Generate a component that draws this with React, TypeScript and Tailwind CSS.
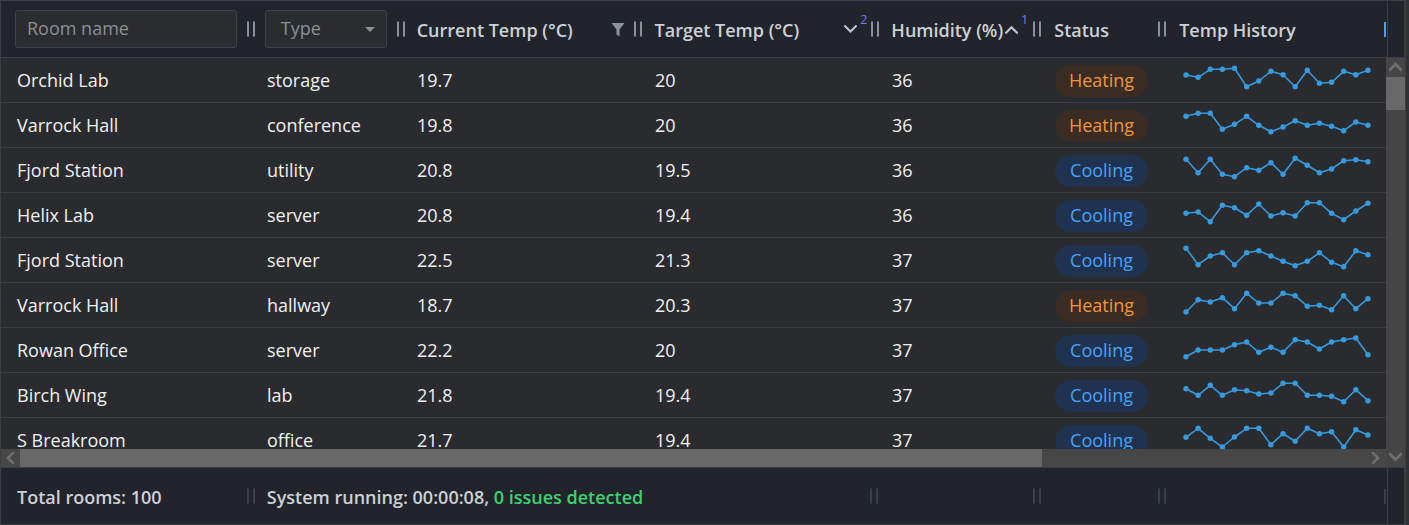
import React from 'react';

// Dark room-monitoring grid, one screen of it

interface Room {
    name: string;
    type: string;
    current: string;
    target: string;
    humidity: number;
    status: 'Heating' | 'Cooling';
    history: number[];
}

const rooms: Room[] = [
    { name: 'Orchid Lab', type: 'storage', current: '19.7', target: '20', humidity: 36, status: 'Heating', history: [17, 19.3, 11.3, 11.3, 10.3, 28.7, 23, 13.3, 16.7, 28.7, 12.3, 25.3, 24.3, 13.3, 16.7, 12.3] },
    { name: 'Varrock Hall', type: 'conference', current: '19.8', target: '20', humidity: 36, status: 'Heating', history: [13.3, 10.3, 10.3, 26.3, 21.3, 13.3, 22.3, 28.7, 24, 17.7, 22.3, 20.3, 23.3, 27.7, 19, 22.3] },
    { name: 'Fjord Station', type: 'utility', current: '20.8', target: '19.5', humidity: 36, status: 'Cooling', history: [11.3, 24.7, 11.3, 26.3, 28.7, 19.7, 22.3, 14.7, 26.3, 10.3, 17.3, 24.7, 21, 12.7, 11.7, 13.7] },
    { name: 'Helix Lab', type: 'server', current: '20.8', target: '19.4', humidity: 36, status: 'Cooling', history: [20.3, 19, 28.7, 12.3, 14.7, 22.3, 11, 23, 19.7, 23, 9.7, 9.7, 20.3, 26.7, 18, 10.3] },
    { name: 'Fjord Station', type: 'server', current: '22.5', target: '21.3', humidity: 37, status: 'Cooling', history: [10.3, 26.7, 18, 14.7, 26.7, 14.7, 12.7, 18, 23.3, 27.7, 23.3, 14.7, 24.3, 28.7, 12.7, 16.7] },
    { name: 'Varrock Hall', type: 'hallway', current: '18.7', target: '20.3', humidity: 37, status: 'Heating', history: [29, 16.7, 19, 14.7, 25.7, 10.3, 20, 20, 10.3, 12.7, 23.3, 22.3, 26.7, 12.7, 25.7, 15.7] },
    { name: 'Rowan Office', type: 'server', current: '22.2', target: '20', humidity: 37, status: 'Cooling', history: [28.7, 22, 22, 22, 16.7, 14, 24.3, 19.3, 24.3, 11.7, 14, 21, 14, 11.7, 10, 26.7] },
    { name: 'Birch Wing', type: 'lab', current: '21.8', target: '19.4', humidity: 37, status: 'Cooling', history: [15.7, 22.3, 12.3, 22.3, 16.7, 17.7, 21, 20, 10.3, 10.3, 22.3, 22.3, 23.3, 28.7, 16.7, 27.7] },
    { name: 'S Breakroom', type: 'office', current: '21.7', target: '19.4', humidity: 37, status: 'Cooling', history: [19.3, 10.3, 20.3, 29, 19, 10.3, 10.3, 26.7, 15.7, 23.3, 10.3, 15.7, 13.7, 29, 11.7, 17] },
];

const Grip: React.FC<{ dim?: boolean }> = ({ dim }) => {
    const bar = dim ? 'bg-[#3a3f46]' : 'bg-[#8a919b]';
    return (
        <span className="absolute right-[-4px] top-1/2 -translate-y-1/2 z-10 flex gap-[4px]">
            <span className={`w-[2px] h-[15px] ${bar}`} />
            <span className={`w-[2px] h-[15px] ${bar}`} />
        </span>
    );
};

const Chevron: React.FC<{ dir: 'up' | 'down' | 'left' | 'right'; color: string; size?: number; width?: number }> = ({ dir, color, size = 12, width = 2 }) => {
    const pts = {
        down: '1,2 6,7 11,2',
        up: '1,8 6,3 11,8',
        left: '8,1 3,6 8,11',
        right: '3,1 8,6 3,11',
    }[dir];
    return (
        <svg width={size} height={size} viewBox="0 0 12 12" className="block">
            <polyline points={pts} fill="none" stroke={color} strokeWidth={width} strokeLinecap="square" />
        </svg>
    );
};

const Sparkline: React.FC<{ values: number[] }> = ({ values }) => {
    const pts = values.map((y, i) => [23 + i * 12.13, y]);
    return (
        <svg width="222" height="44" className="block">
            <polyline points={pts.map(p => p.join(',')).join(' ')} fill="none" stroke="#379ade" strokeWidth="1.6" strokeLinejoin="round" />
            {pts.map(([x, y], i) => (
                <circle key={i} cx={x} cy={y} r="2.7" fill="#379ade" />
            ))}
        </svg>
    );
};

const StatusPill: React.FC<{ status: Room['status'] }> = ({ status }) => {
    const heat = status === 'Heating';
    return (
        <span className={`w-[93px] h-[32px] rounded-full flex items-center justify-center ${heat ? 'bg-[#3a2c22] text-[#f0953b]' : 'bg-[#1f3350] text-[#4aa2f6]'}`}>
            {status}
        </span>
    );
};

const App: React.FC = () => {
    return (
        <div className="w-[1409px] h-[525px] flex bg-[#2f3134] font-['Open_Sans',sans-serif] text-[18px] overflow-hidden">
            <div className="w-[1406px] h-[525px] flex flex-col border border-[#3b3e43] bg-[#2a2b2e]">
                {/* header */}
                <div className="h-[57px] flex shrink-0 bg-[#21252b] border-b border-[#3a3e44] text-[#cdd0d5] font-semibold">
                    <div className="relative w-[250px] flex items-center pl-[14px]">
                        <div className="w-[222px] h-[38px] rounded-[3px] border border-[#3f4349] bg-[#2a2c30] flex items-center pl-[11px] pb-[1px] text-[#8b9096] font-normal">
                            Room name
                        </div>
                        <Grip />
                    </div>
                    <div className="relative w-[150px] flex items-center pl-[14px]">
                        <div className="w-[122px] h-[38px] rounded-[3px] border border-[#3f4349] bg-[#2a2c30] flex items-center pl-[15px] pr-[11px] text-[#8b9096] font-normal">
                            <span className="-mt-[2px]">Type</span>
                            <svg width="10" height="5" viewBox="0 0 10 5" className="ml-auto">
                                <polygon points="0,0 10,0 5,5" fill="#8b9096" />
                            </svg>
                        </div>
                        <Grip />
                    </div>
                    <div className="relative w-[237px] flex items-center pl-4 pr-[13px] pt-[2px]">
                        <span className="whitespace-nowrap">Current Temp (°C)</span>
                        <svg width="14" height="15" viewBox="0 0 14 15" className="ml-auto -mt-[2px]">
                            <path d="M0.5 1 H13.5 L8.5 7.5 V14.5 L5.5 12.5 V7.5 Z" fill="#8d939c" />
                        </svg>
                        <Grip />
                    </div>
                    <div className="relative w-[238px] flex items-center pl-[17px] pr-[8px] pt-[2px]">
                        <span className="whitespace-nowrap">Target Temp (°C)</span>
                        <span className="ml-auto flex items-center">
                            <Chevron dir="down" color="#c3c7cd" size={13} />
                            <span className="relative top-[-10px] ml-[3px] text-[12.5px] leading-none font-normal text-[#7a78f0]">2</span>
                        </span>
                        <Grip />
                    </div>
                    <div className="relative w-[162px] flex items-center pl-4 pr-[9px] pt-[2px]">
                        <span className="whitespace-nowrap">Humidity (%)</span>
                        <span className="ml-auto flex items-center">
                            <Chevron dir="up" color="#c3c7cd" size={13} />
                            <span className="relative top-[-10px] ml-[3px] text-[12.5px] leading-none font-normal text-[#7a78f0]">1</span>
                        </span>
                        <Grip />
                    </div>
                    <div className="relative w-[125px] flex items-center pl-[17px] pt-[2px]">
                        <span>Status</span>
                        <Grip />
                    </div>
                    <div className="relative w-[222px] flex items-center pl-[17px] pt-[2px]">
                        <span className="whitespace-nowrap">Temp History</span>
                    </div>
                    <div className="w-[2px] flex items-center">
                        <span className="w-[2px] h-[15px] bg-[#4f9fe8]" />
                    </div>
                    <div className="w-[18px] ml-[1px] border-l border-r border-[#3a3e44]" />
                </div>

                {/* body + scrollbars */}
                <div className="h-[409px] flex shrink-0">
                    <div className="w-[1385px] flex flex-col">
                        <div className="h-[391px] overflow-hidden text-[#f0f0f0]">
                            {rooms.map((r, i) => (
                                <div key={i} className="h-[45px] flex border-b border-[#3a3d42]">
                                    <div className="w-[250px] flex items-center pl-4">{r.name}</div>
                                    <div className="w-[150px] flex items-center pl-4">{r.type}</div>
                                    <div className="w-[237px] flex items-center pl-4">{r.current}</div>
                                    <div className="w-[238px] flex items-center pl-[17px]">{r.target}</div>
                                    <div className="w-[162px] flex items-center pl-4">{r.humidity}</div>
                                    <div className="w-[125px] flex items-center pl-[17px] pt-[1px]">
                                        <StatusPill status={r.status} />
                                    </div>
                                    <div className="w-[222px]">
                                        <Sparkline values={r.history} />
                                    </div>
                                </div>
                            ))}
                        </div>
                        <div className="h-[18px] flex bg-[#474747]">
                            <div className="w-[19px] flex items-center justify-center">
                                <Chevron dir="left" color="#6f6f6f" size={12} width={2.6} />
                            </div>
                            <div className="w-[1022px] bg-[#686868]" />
                            <div className="flex-1 flex items-center justify-end pr-[4px]">
                                <Chevron dir="right" color="#6f6f6f" size={12} width={2.6} />
                            </div>
                        </div>
                    </div>
                    <div className="w-[19px] flex flex-col bg-[#454545]">
                        <div className="h-[19px] flex items-center justify-center">
                            <Chevron dir="up" color="#6f6f6f" size={13} width={2.6} />
                        </div>
                        <div className="h-[33px] bg-[#686868]" />
                        <div className="flex-1" />
                        <div className="h-[18px] flex items-center justify-center">
                            <Chevron dir="down" color="#6f6f6f" size={13} width={2.6} />
                        </div>
                    </div>
                </div>

                {/* footer */}
                <div className="flex-1 flex bg-[#21252b] border-t border-[#3a3e44] text-[#cdd0d5] font-semibold">
                    <div className="relative w-[250px] flex items-center pl-4 pt-[2px]">
                        Total rooms: 100
                        <Grip dim />
                    </div>
                    <div className="w-[625px] flex items-center pl-4 pt-[2px] whitespace-nowrap">
                        System running: 00:00:08,&nbsp;<span className="text-[#3fd071]">0 issues detected</span>
                    </div>
                    <div className="relative w-[162px]">
                        <span className="absolute left-[-5px] top-1/2 -translate-y-1/2 flex gap-[4px]">
                            <span className="w-[2px] h-[15px] bg-[#3a3f46]" />
                            <span className="w-[2px] h-[15px] bg-[#3a3f46]" />
                        </span>
                        <Grip dim />
                    </div>
                    <div className="relative w-[125px]">
                        <Grip dim />
                    </div>
                    <div className="w-[222px]" />
                    <div className="w-[2px] flex items-center">
                        <span className="w-[2px] h-[15px] bg-[#3a3f46]" />
                    </div>
                    <div className="w-[18px] ml-[1px] border-l border-r border-[#3a3e44]" />
                </div>
            </div>
        </div>
    );
};

export default App;
